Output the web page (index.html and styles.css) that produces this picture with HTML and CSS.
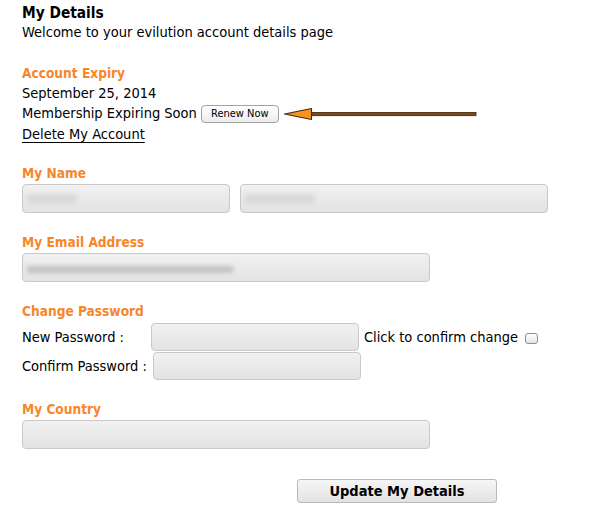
FILE: index.html
```html
<!DOCTYPE html>
<html>
<head>
<meta charset="utf-8">
<link rel="stylesheet" href="styles.css">
</head>
<body>
<div class="page">
  <h1 class="title">My Details</h1>
  <p class="line">Welcome to your evilution account details page</p>

  <h2 class="label first">Account Expiry</h2>
  <p class="line">September 25, 2014</p>
  <p class="line expiring">Membership Expiring Soon <span class="renew">Renew Now</span><svg class="arrow" width="196" height="16" viewBox="0 0 196 16"><rect x="27" y="6.5" width="166" height="3.2" fill="#7b4a17" stroke="#3d2208" stroke-width="0.8"/><path d="M1.5 8 L28.5 2.5 L28.5 13.5 Z" fill="#f7921e" stroke="#4a2a0c" stroke-width="1.1" stroke-linejoin="round"/></svg></p>
  <p class="line"><a class="delete" href="#">Delete My Account</a></p>

  <h2 class="label">My Name</h2>
  <div class="row">
    <div class="field name-first"><span class="redact faint"></span></div>
    <div class="field name-last"><span class="redact faint wide"></span></div>
  </div>

  <h2 class="label">My Email Address</h2>
  <div class="field wide-field"><span class="redact dark"></span></div>

  <h2 class="label">Change Password</h2>
  <div class="pw-row">
    <span class="pw-label new">New Password :</span>
    <div class="field pw"></div>
    <span class="confirm-text">Click to confirm change</span>
    <span class="checkbox"></span>
  </div>
  <div class="pw-row">
    <span class="pw-label confirm">Confirm Password :</span>
    <div class="field pw"></div>
  </div>

  <h2 class="label">My Country</h2>
  <div class="field wide-field"></div>

  <div class="actions">
    <span class="update">Update My Details</span>
  </div>
</div>
</body>
</html>
```
FILE: styles.css
```css
* { box-sizing: border-box; }
html, body { margin: 0; padding: 0; background: #fff; }
body {
  font-family: "DejaVu Sans Condensed", "DejaVu Sans", Tahoma, sans-serif;
  font-size: 14.5px;
  color: #000;
}
.page { padding: 4px 0 0 22px; }
.title {
  margin: 0;
  font-size: 15.3px;
  line-height: 18px;
  font-weight: bold;
}
.line {
  margin: 0;
  line-height: 20px;
  height: 20px;
}
.label {
  margin: 19px 0 0;
  font-size: 13.6px;
  line-height: 21px;
  height: 21px;
  font-weight: bold;
  color: #f7862a;
}
.label.first { margin-top: 21px; height: 20px; line-height: 20px; }
.expiring { display: flex; align-items: center; height: 21px; line-height: 21px; }
.membership { white-space: nowrap; }
.renew {
  display: inline-flex;
  align-items: center;
  justify-content: center;
  margin-left: 4px;
  width: 78px;
  height: 18px;
  font-size: 11px;
  border: 1px solid #a3a3a3;
  border-radius: 4px;
  background: linear-gradient(#ffffff, #ececec);
}
.arrow { margin-left: 4px; display: block; }
.delete { color: #000; text-decoration: underline; text-underline-offset: 3px; }
.row { display: flex; gap: 10px; }
.field {
  height: 29px;
  border: 1px solid #c9c9c9;
  border-radius: 4px;
  background: linear-gradient(#f1f1f1, #e3e3e4);
  display: flex;
  align-items: center;
  padding-left: 4px;
}
.name-first { width: 208px; }
.name-last { width: 308px; }
.wide-field { width: 408px; }
.redact { display: block; height: 10px; filter: blur(2px); }
.redact.faint { width: 50px; background: #dadada; }
.redact.faint.wide { width: 70px; }
.redact.dark { width: 206px; height: 7px; background: #c2c2c2; margin-top: 4px; }
.pw-row { display: flex; align-items: center; height: 29px; }
.pw-label { display: block; }
.pw-label.new { width: 129px; }
.pw-label.confirm { width: 131px; }
.field.pw { width: 208px; height: 28px; }
.confirm-text { margin-left: 5px; }
.checkbox {
  display: block;
  width: 13px;
  height: 11px;
  margin-left: 7px;
  margin-top: 4px;
  border: 1px solid #8e8e8e;
  border-radius: 3px;
  background: linear-gradient(#ffffff, #e6e6e6);
}
.actions { margin-top: 30px; padding-left: 275px; }
.update {
  display: flex;
  align-items: center;
  justify-content: center;
  width: 200px;
  height: 24px;
  font-size: 14.5px;
  font-weight: bold;
  border: 1px solid #b9b9b9;
  border-radius: 3px;
  background: linear-gradient(#f6f6f6, #e2e2e2);
}
```
